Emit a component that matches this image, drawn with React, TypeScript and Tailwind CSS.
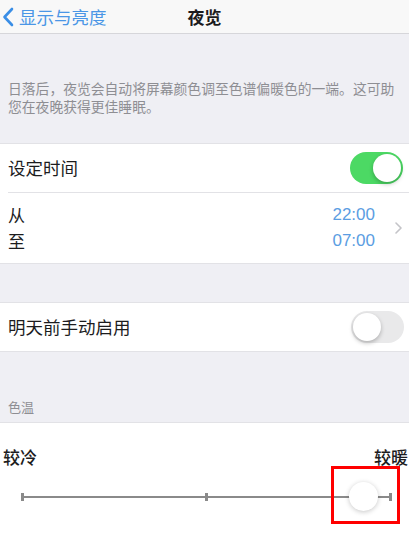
import React from "react";

const font = { fontFamily: '"Noto Sans CJK SC", "Noto Sans", sans-serif' };

function Toggle({ on }: { on: boolean }) {
  return (
    <div
      className={`relative w-[53px] h-[32px] rounded-full ${
        on ? "bg-[#4cd964]" : "bg-[#e9e9ea]"
      }`}
    >
      <div
        className={`absolute top-[2px] w-[28px] h-[28px] rounded-full bg-white shadow-[0_2px_4px_rgba(0,0,0,0.25)] ${
          on ? "left-[23px]" : "left-[2px]"
        }`}
      />
    </div>
  );
}

export default function App() {
  return (
    <div style={font} className="w-[409px] h-[537px] overflow-hidden bg-[#efeff4] text-[#1c1c1e] flex flex-col">
      {/* nav */}
      <div className="relative h-[34px] shrink-0 bg-[#f8f8f8] border-b border-[#d6d6da] flex items-center">
        <div className="flex items-center pl-[2px] gap-[5px] text-[#4a96e6]">
          <svg width="12" height="20" viewBox="0 0 12 20" fill="none">
            <path d="M10 2L2.5 10L10 18" stroke="#3a8ee6" strokeWidth="2.6" strokeLinecap="round" strokeLinejoin="round" />
          </svg>
          <span className="text-[17.5px] leading-[22px]">显示与亮度</span>
        </div>
        <div className="absolute left-0 right-0 text-center pointer-events-none text-[17px] leading-[22px] font-bold">
          夜览
        </div>
      </div>

      {/* description */}
      <div className="h-[109px] shrink-0 pt-[45px] px-[8px] text-[13.8px] leading-[18px] text-[#8e8e93]">
        日落后，夜览会自动将屏幕颜色调至色谱偏暖色的一端。这可助您在夜晚获得更佳睡眠。
      </div>

      {/* schedule */}
      <div className="shrink-0 bg-white border-y border-[#e2e2e6]">
        <div className="h-[48px] flex items-center justify-between pl-[8px] pr-[6px]">
          <span className="text-[17.5px]">设定时间</span>
          <Toggle on />
        </div>
        <div className="ml-[8px] h-px bg-[#e2e2e6]" />
        <div className="h-[70px] flex items-center pl-[8px] pr-[7px]">
          <div className="flex flex-col text-[17px] leading-[26px]">
            <span>从</span>
            <span>至</span>
          </div>
          <div className="ml-auto flex flex-col items-end text-[17px] leading-[26px] text-[#5b9de2]" style={{ fontFamily: '"Liberation Sans", sans-serif' }}>
            <span>22:00</span>
            <span>07:00</span>
          </div>
          <svg className="ml-[20px]" width="7" height="12" viewBox="0 0 7 12" fill="none">
            <path d="M1 1L6 6L1 11" stroke="#c4c4c8" strokeWidth="1.6" strokeLinecap="round" strokeLinejoin="round" />
          </svg>
        </div>
      </div>

      <div className="h-[38px] shrink-0" />

      {/* manual */}
      <div className="shrink-0 bg-white border-y border-[#e2e2e6] h-[50px] flex items-center justify-between pl-[8px] pr-[5px]">
        <span className="text-[17.5px]">明天前手动启用</span>
        <Toggle on={false} />
      </div>

      {/* color temp */}
      <div className="h-[70px] shrink-0 pt-[46px] pl-[8px] text-[13px] leading-[18px] text-[#8e8e93]">色温</div>

      <div className="relative flex-1 bg-white border-t border-[#e2e2e6]">
        <div className="flex items-center justify-between pt-[23px] pl-[3px] pr-[1px] text-[17px] leading-[22px] font-medium">
          <span>较冷</span>
          <span>较暖</span>
        </div>
        <div className="relative mt-[14px] h-[30px]">
          <div className="absolute left-[22px] w-[368px] top-[14px] h-[2px] bg-[#8a8a8a]" />
          <div className="absolute left-[21px] top-[11px] w-[3px] h-[8px] bg-[#8a8a8a]" />
          <div className="absolute left-[205px] top-[11px] w-[3px] h-[8px] bg-[#8a8a8a]" />
          <div className="absolute left-[389px] top-[11px] w-[3px] h-[8px] bg-[#8a8a8a]" />
          <div className="absolute left-[349px] top-0 w-[29px] h-[29px] rounded-full bg-white shadow-[0_1px_5px_rgba(0,0,0,0.22)]" />
        </div>
        <div className="absolute left-[331px] top-[43px] w-[69px] h-[58px] border-[3px] border-[#ff0000]" />
      </div>
    </div>
  );
}
